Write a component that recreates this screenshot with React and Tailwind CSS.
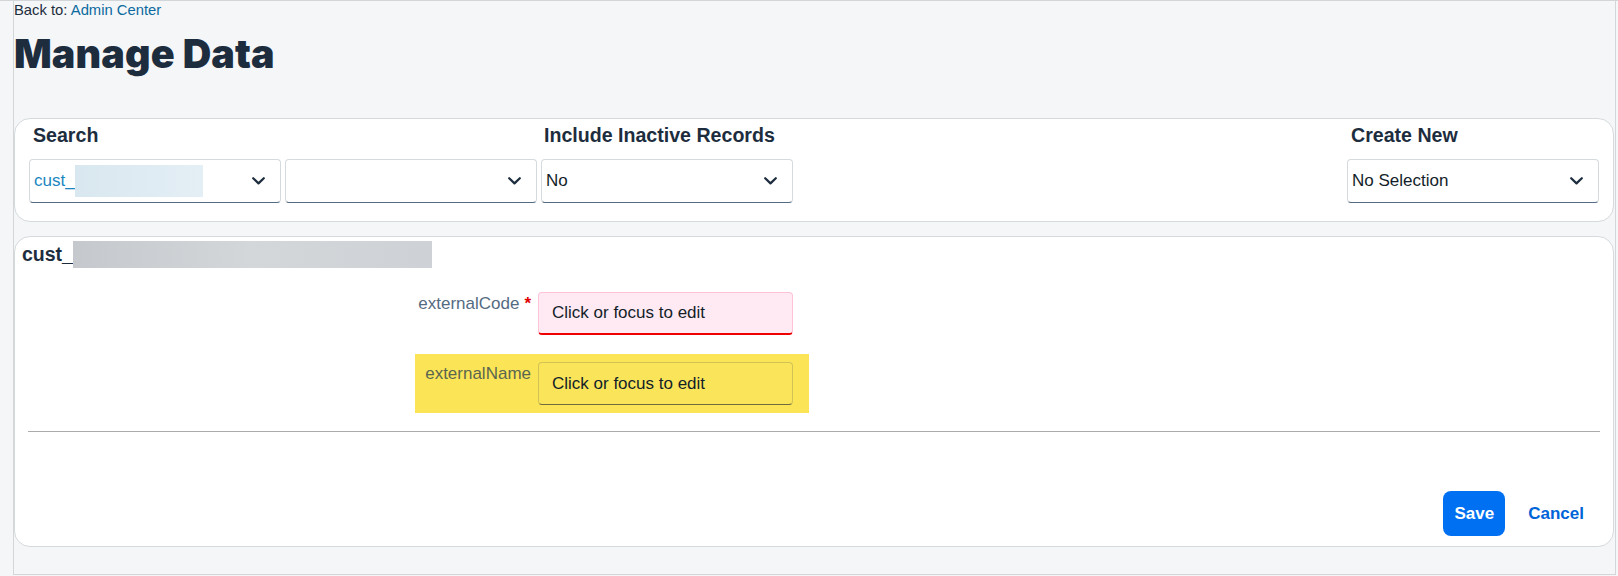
import React from 'react'

const FONT = { fontFamily: '"Liberation Sans", Arial, sans-serif' }

function Chevron() {
  return (
    <svg width="13" height="8" viewBox="0 0 13 8" className="shrink-0">
      <polyline points="1.2,1.2 6.5,6.4 11.8,1.2" fill="none" stroke="#1d2d3e" strokeWidth="2.2" strokeLinecap="round" strokeLinejoin="round" />
    </svg>
  )
}

function Select({ children }) {
  return (
    <div className="w-[252px] h-[44px] flex items-center justify-between pl-[4px] pr-[15px] bg-white border border-[#d5dadd] border-b-[#556b82] rounded-[4px] text-[17px] text-[#131e29]">
      <div className="flex items-center min-w-0">{children}</div>
      <Chevron />
    </div>
  )
}

export default function App() {
  return (
    <div className="w-[1618px] h-[576px] bg-[#f5f6f7] overflow-hidden" style={FONT}>
      <div className="h-px bg-[#d3d6d9]" />
      <div className="ml-[13px] w-[1603px] h-[574px] border-l border-r border-b border-[#d4d7da] flex flex-col">
        <div className="text-[14.8px] leading-[16px] text-[#1d2d3e] pt-px">
          Back to: <span className="text-[#0b6aa0]">Admin Center</span>
        </div>
        <h1
          className="mt-[17px] text-[39.5px] leading-[38px] font-black text-[#1d2d3e] tracking-[0.1px]"
          style={{ fontFamily: 'Inter, "Liberation Sans", sans-serif' }}
        >
          Manage Data
        </h1>

        {/* search card */}
        <div className="mt-[45px] w-[1600px] bg-white border border-[#d5dadd] rounded-[16px] pl-[14px] pr-[14px] pt-[4px] pb-[18px] flex">
          <div className="flex flex-col">
            <div className="pl-[4px] text-[19.6px] leading-[24px] font-bold text-[#1d2d3e]">Search</div>
            <div className="mt-[12px] flex gap-[4px]">
              <Select>
                <span className="text-[#1b86bf]">cust_</span>
                <span className="w-[128px] h-[32px] bg-gradient-to-r from-[#d9e7f0] via-[#deebf2] to-[#e4eff5]" />
              </Select>
              <Select />
            </div>
          </div>
          <div className="flex flex-col ml-[4px]">
            <div className="pl-[3px] text-[19.6px] leading-[24px] font-bold text-[#1d2d3e]">Include Inactive Records</div>
            <div className="mt-[12px]">
              <Select>No</Select>
            </div>
          </div>
          <div className="flex-1" />
          <div className="flex flex-col">
            <div className="pl-[4px] text-[19.6px] leading-[24px] font-bold text-[#1d2d3e]">Create New</div>
            <div className="mt-[12px]">
              <Select>No Selection</Select>
            </div>
          </div>
        </div>

        {/* record card */}
        <div className="mt-[14px] w-[1600px] bg-white border border-[#d5dadd] rounded-[16px] pt-[4px] pb-[10px] flex flex-col">
          <div className="pl-[7px] h-[27px] flex items-center">
            <span className="text-[19.5px] leading-[27px] font-bold text-[#1d2d3e]">cust_</span>
            <span className="w-[359px] h-[27px] bg-gradient-to-r from-[#c5c8cc] via-[#d4d7da] to-[#ced1d5]" />
          </div>

          <div className="mt-[16px] ml-[400px] w-[394px] flex pl-[8px] pr-[16px] py-[8px]">
            <div className="w-[108px] pt-[2px] flex justify-end text-[17px] leading-[20px] text-[#556b82]">
              externalCode<span className="ml-[5px] text-[#e00000] font-bold">*</span>
            </div>
            <div className="ml-[7px] w-[255px] h-[43px] flex items-center pl-[13px] bg-[#ffeaf4] border border-[#ffc2d6] border-b-2 border-b-[#ee0000] rounded-[4px] text-[17px] text-[#131e29]">
              Click or focus to edit
            </div>
          </div>

          <div className="mt-[11px] ml-[400px] w-[394px] flex pl-[8px] pr-[16px] py-[8px] bg-[#fbe556]">
            <div className="w-[108px] pt-[2px] flex justify-end text-[17px] leading-[20px] text-[#5b6651]">
              externalName
            </div>
            <div className="ml-[7px] w-[255px] h-[43px] flex items-center pl-[13px] bg-[#fae55a] border border-[#d2c357] border-b-[#6f6b3e] rounded-[4px] text-[17px] text-[#131e29]">
              Click or focus to edit
            </div>
          </div>

          <div className="mt-[18px] mx-[13px] h-px bg-[#a9abad]" />

          <div className="mt-[59px] flex justify-end items-center pr-[29px] gap-[23px]">
            <button type="button" className="h-[45px] w-[62px] rounded-[8px] bg-[#0070f2] text-white text-[17px] font-bold">
              Save
            </button>
            <button type="button" className="text-[17px] font-semibold text-[#0064d9]">
              Cancel
            </button>
          </div>
        </div>
      </div>
    </div>
  )
}
